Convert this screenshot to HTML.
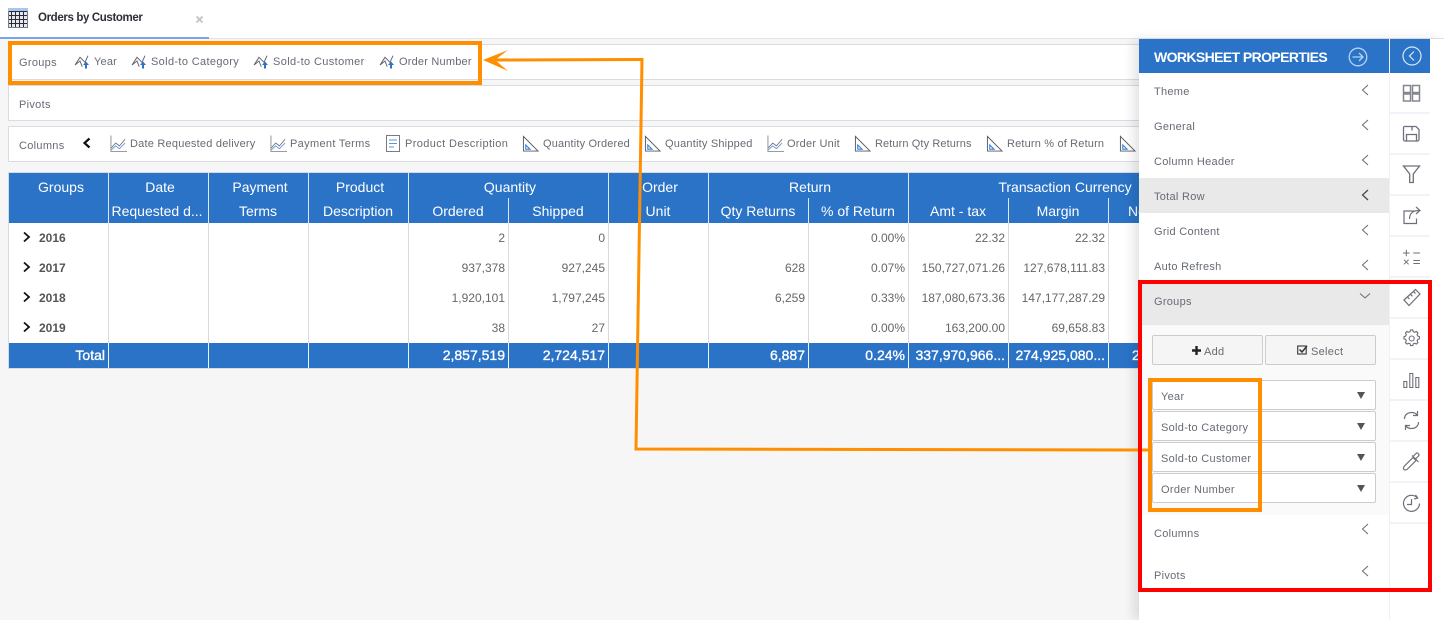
<!DOCTYPE html>
<html><head><meta charset="utf-8"><title>Orders by Customer</title>
<style>
html,body{margin:0;padding:0;width:1444px;height:620px;overflow:hidden;background:#fff}
#page{position:relative;width:1444px;height:620px;overflow:hidden;background:#f6f6f6;font-family:"Liberation Sans",sans-serif}
#page div,#page span.a,#page svg.a{position:absolute}
.t{font-size:11px;color:#666b74;white-space:nowrap;letter-spacing:.3px;line-height:14px}
.bar{left:8px;width:1140px;height:36px;background:#fff;border:1px solid #d8dce3;box-sizing:border-box}
.h{height:24px;line-height:24px;color:#fff;font-size:14px;text-align:center;white-space:nowrap}
.c{width:97px;height:30px;line-height:30px;font-size:12px;color:#666;text-align:right;white-space:nowrap}
.f{width:97px;height:25px;line-height:25px;font-size:14px;color:#fff;text-align:right;white-space:nowrap;-webkit-text-stroke:.35px #fff}
.y{left:39px;height:30px;line-height:30px;font-size:12px;font-weight:bold;color:#555}
.vl{width:1px;background:#d5dae3}
.m{left:1154px;font-size:11px;color:#666b74;white-space:nowrap;letter-spacing:.28px;line-height:14px}
.sep{left:1390px;width:40px;height:2px;background:#f0f3f8}
.fld{left:1152px;width:224px;background:#fff;border:1px solid #ccc;border-radius:2px;box-sizing:border-box}
.tri{left:1357px;width:0;height:0;border-left:4px solid transparent;border-right:4px solid transparent;border-top:7px solid #555}
.btn{top:335px;height:30px;background:#f5f5f5;border:1px solid #ccc;border-radius:2px;box-sizing:border-box}
</style></head>
<body><div id="page">
<svg width="0" height="0" style="position:absolute"><defs>
<symbol id="g" viewBox="0 0 18 16"><path d="M1 11 6 3.300l5 5L14 1.700M1 11l5-4 2.300 5.700" fill="none" stroke="#626773" stroke-width="1"/><path d="M12 14.500V10" fill="none" stroke="#2a73c7" stroke-width="2"/><path d="M9 11 12 7.500 15 11z" fill="#2a73c7"/></symbol>
<symbol id="l" viewBox="0 0 18 18"><path d="M1 0v17h17" fill="none" stroke="#8a8e96" stroke-width="1"/><path d="M1.500 13 6 8l4 3 6-7" fill="none" stroke="#6a6e78" stroke-width=".9"/><path d="M1.500 15 6 11l4 3 6-6" fill="none" stroke="#5b93d8" stroke-width=".9"/></symbol>
<symbol id="r" viewBox="0 0 18 18"><path d="M1.500 1v15.500H17z" fill="none" stroke="#555a64" stroke-width="1"/><path d="M4 10v4.500h4.500z" fill="none" stroke="#3a85dc" stroke-width="1.200"/></symbol>
<symbol id="ch" viewBox="0 0 8 12"><path d="M7 1 1.500 6 7 11" fill="none" stroke="#666b74" stroke-width="1"/></symbol>
</defs></svg>

<!-- tab bar -->
<div style="left:0;top:0;width:1444px;height:38px;background:#fff"></div>
<div style="left:0;top:38px;width:1444px;height:1px;background:#e2e4e8"></div>
<div style="left:0;top:37px;width:209px;height:2px;background:#78a6e6"></div>
<svg class="a" style="left:8px;top:8px" width="20" height="20" viewBox="0 0 20 20"><rect width="20" height="20" fill="#e6e8ee"/><rect width="20" height="3" fill="#a8c6ee"/><path d="M0 3.500h20M0 7.500h20M0 11.500h20M0 15.500h20M3.500 3v17M7.500 3v17M11.500 3v17M15.500 3v17" stroke="#2a2c36" stroke-width="1"/><path d="M.500 3v16.500h19V3" fill="none" stroke="#777b88"/></svg>
<div class="t" style="left:38px;top:11px;font-size:11.500px;font-weight:bold;color:#2c2f36;letter-spacing:-.37px">Orders by Customer</div>
<svg class="a" style="left:196px;top:16px" width="7" height="7"><path d="M.500.500l6 6M6.500.500l-6 6" stroke="#c4c4c4" stroke-width="1.800"/></svg>

<!-- bars -->
<div class="bar" style="top:44px"></div>
<div class="bar" style="top:85px"></div>
<div class="bar" style="top:126px"></div>
<div class="t" style="left:19px;top:56px">Groups</div>
<svg class="a" style="left:74px;top:54px" width="18" height="16"><use href="#g"/></svg><div class="t" style="left:94px;top:55px;letter-spacing:.2px">Year</div>
<svg class="a" style="left:131px;top:54px" width="18" height="16"><use href="#g"/></svg><div class="t" style="left:151px;top:55px;letter-spacing:.35px">Sold-to Category</div>
<svg class="a" style="left:253px;top:54px" width="18" height="16"><use href="#g"/></svg><div class="t" style="left:273px;top:55px;letter-spacing:.38px">Sold-to Customer</div>
<svg class="a" style="left:379px;top:54px" width="18" height="16"><use href="#g"/></svg><div class="t" style="left:399px;top:55px;letter-spacing:.2px">Order Number</div>
<div class="t" style="left:19px;top:98px">Pivots</div>
<div class="t" style="left:19px;top:139px">Columns</div>
<svg class="a" style="left:82px;top:137px" width="9" height="12"><path d="M7.500 1.500 2.500 6l5 4.500" fill="none" stroke="#111" stroke-width="2.200"/></svg>
<svg class="a" style="left:110px;top:135px" width="17" height="18"><use href="#l"/></svg><div class="t" style="left:130px;top:137px;letter-spacing:.22px">Date Requested delivery</div>
<svg class="a" style="left:270px;top:135px" width="17" height="18"><use href="#l"/></svg><div class="t" style="left:290px;top:137px;letter-spacing:.33px">Payment Terms</div>
<svg class="a" style="left:386px;top:135px" width="14" height="18"><rect x=".500" y=".500" width="13" height="16" fill="none" stroke="#777b85"/><path d="M3 5h8M3 8.500h8M3 12h5" stroke="#5b93d8"/></svg><div class="t" style="left:405px;top:137px;letter-spacing:.38px">Product Description</div>
<svg class="a" style="left:522px;top:135px" width="17" height="18"><use href="#r"/></svg><div class="t" style="left:543px;top:137px;letter-spacing:.16px">Quantity Ordered</div>
<svg class="a" style="left:644px;top:135px" width="17" height="18"><use href="#r"/></svg><div class="t" style="left:665px;top:137px;letter-spacing:.2px">Quantity Shipped</div>
<svg class="a" style="left:767px;top:135px" width="17" height="18"><use href="#l"/></svg><div class="t" style="left:787px;top:137px;letter-spacing:.22px">Order Unit</div>
<svg class="a" style="left:854px;top:135px" width="17" height="18"><use href="#r"/></svg><div class="t" style="left:875px;top:137px;letter-spacing:.1px">Return Qty Returns</div>
<svg class="a" style="left:986px;top:135px" width="17" height="18"><use href="#r"/></svg><div class="t" style="left:1007px;top:137px;letter-spacing:.17px">Return % of Return</div>
<svg class="a" style="left:1119px;top:135px" width="17" height="18"><use href="#r"/></svg>

<!-- table -->
<div style="left:8px;top:172px;width:1140px;height:197px;background:#fff;border:1px solid #d5dae3;box-sizing:border-box"></div>
<div style="left:9px;top:173px;width:1139px;height:50px;background:#2a73c7"></div>
<div style="left:9px;top:343px;width:1139px;height:25px;background:#2a73c7"></div>
<div class="vl" style="left:108px;top:173px;height:195px"></div>
<div class="vl" style="left:208px;top:173px;height:195px"></div>
<div class="vl" style="left:308px;top:173px;height:195px"></div>
<div class="vl" style="left:408px;top:173px;height:195px"></div>
<div class="vl" style="left:508px;top:223px;height:145px"></div>
<div class="vl" style="left:608px;top:173px;height:195px"></div>
<div class="vl" style="left:708px;top:173px;height:195px"></div>
<div class="vl" style="left:808px;top:223px;height:145px"></div>
<div class="vl" style="left:908px;top:173px;height:195px"></div>
<div class="vl" style="left:1008px;top:223px;height:145px"></div>
<div class="vl" style="left:1108px;top:223px;height:145px"></div>
<div class="vl" style="left:508px;top:198px;height:25px;background:#dfe8f4"></div>
<div class="vl" style="left:808px;top:198px;height:25px;background:#dfe8f4"></div>
<div class="vl" style="left:1008px;top:198px;height:25px;background:#dfe8f4"></div>
<div class="vl" style="left:1108px;top:198px;height:25px;background:#dfe8f4"></div>
<div class="vl" style="left:108px;top:173px;height:50px;background:#dfe8f4"></div>
<div class="vl" style="left:208px;top:173px;height:50px;background:#dfe8f4"></div>
<div class="vl" style="left:308px;top:173px;height:50px;background:#dfe8f4"></div>
<div class="vl" style="left:408px;top:173px;height:50px;background:#dfe8f4"></div>
<div class="vl" style="left:608px;top:173px;height:50px;background:#dfe8f4"></div>
<div class="vl" style="left:708px;top:173px;height:50px;background:#dfe8f4"></div>
<div class="vl" style="left:908px;top:173px;height:50px;background:#dfe8f4"></div>
<div class="vl" style="left:108px;top:343px;height:25px;background:#eef3fa"></div>
<div class="vl" style="left:208px;top:343px;height:25px;background:#eef3fa"></div>
<div class="vl" style="left:308px;top:343px;height:25px;background:#eef3fa"></div>
<div class="vl" style="left:408px;top:343px;height:25px;background:#eef3fa"></div>
<div class="vl" style="left:508px;top:343px;height:25px;background:#eef3fa"></div>
<div class="vl" style="left:608px;top:343px;height:25px;background:#eef3fa"></div>
<div class="vl" style="left:708px;top:343px;height:25px;background:#eef3fa"></div>
<div class="vl" style="left:808px;top:343px;height:25px;background:#eef3fa"></div>
<div class="vl" style="left:908px;top:343px;height:25px;background:#eef3fa"></div>
<div class="vl" style="left:1008px;top:343px;height:25px;background:#eef3fa"></div>
<div class="vl" style="left:1108px;top:343px;height:25px;background:#eef3fa"></div>

<div class="h" style="left:11px;top:175px;width:100px">Groups</div>
<div class="h" style="left:110px;top:175px;width:100px">Date</div>
<div class="h" style="left:210px;top:175px;width:100px">Payment</div>
<div class="h" style="left:310px;top:175px;width:100px">Product</div>
<div class="h" style="left:410px;top:175px;width:200px">Quantity</div>
<div class="h" style="left:610px;top:175px;width:100px">Order</div>
<div class="h" style="left:710px;top:175px;width:200px">Return</div>
<div class="h" style="left:915px;top:175px;width:300px">Transaction Currency</div>
<div class="h" style="left:107px;top:199px;width:100px">Requested d...</div>
<div class="h" style="left:208px;top:199px;width:100px">Terms</div>
<div class="h" style="left:308px;top:199px;width:100px">Description</div>
<div class="h" style="left:408px;top:199px;width:100px">Ordered</div>
<div class="h" style="left:508px;top:199px;width:100px">Shipped</div>
<div class="h" style="left:608px;top:199px;width:100px">Unit</div>
<div class="h" style="left:708px;top:199px;width:100px">Qty Returns</div>
<div class="h" style="left:808px;top:199px;width:100px">% of Return</div>
<div class="h" style="left:908px;top:199px;width:100px">Amt - tax</div>
<div class="h" style="left:1008px;top:199px;width:100px">Margin</div>
<div class="h" style="left:1128px;top:199px;width:40px;text-align:left">Net</div>

<svg class="a" style="left:22px;top:231px" width="9" height="12"><path d="M2 1.500 7 6l-5 4.500" fill="none" stroke="#111" stroke-width="1.800"/></svg>
<svg class="a" style="left:22px;top:261px" width="9" height="12"><path d="M2 1.500 7 6l-5 4.500" fill="none" stroke="#111" stroke-width="1.800"/></svg>
<svg class="a" style="left:22px;top:291px" width="9" height="12"><path d="M2 1.500 7 6l-5 4.500" fill="none" stroke="#111" stroke-width="1.800"/></svg>
<svg class="a" style="left:22px;top:321px" width="9" height="12"><path d="M2 1.500 7 6l-5 4.500" fill="none" stroke="#111" stroke-width="1.800"/></svg>
<div class="y" style="top:223px">2016</div>
<div class="y" style="top:253px">2017</div>
<div class="y" style="top:283px">2018</div>
<div class="y" style="top:313px">2019</div>

<div class="c" style="left:408px;top:223px">2</div><div class="c" style="left:508px;top:223px">0</div><div class="c" style="left:808px;top:223px">0.00%</div><div class="c" style="left:908px;top:223px">22.32</div><div class="c" style="left:1008px;top:223px">22.32</div>
<div class="c" style="left:408px;top:253px">937,378</div><div class="c" style="left:508px;top:253px">927,245</div><div class="c" style="left:708px;top:253px">628</div><div class="c" style="left:808px;top:253px">0.07%</div><div class="c" style="left:908px;top:253px">150,727,071.26</div><div class="c" style="left:1008px;top:253px">127,678,111.83</div>
<div class="c" style="left:408px;top:283px">1,920,101</div><div class="c" style="left:508px;top:283px">1,797,245</div><div class="c" style="left:708px;top:283px">6,259</div><div class="c" style="left:808px;top:283px">0.33%</div><div class="c" style="left:908px;top:283px">187,080,673.36</div><div class="c" style="left:1008px;top:283px">147,177,287.29</div>
<div class="c" style="left:408px;top:313px">38</div><div class="c" style="left:508px;top:313px">27</div><div class="c" style="left:808px;top:313px">0.00%</div><div class="c" style="left:908px;top:313px">163,200.00</div><div class="c" style="left:1008px;top:313px">69,658.83</div>

<div class="f" style="left:8px;top:343px">Total</div>
<div class="f" style="left:408px;top:343px">2,857,519</div><div class="f" style="left:508px;top:343px">2,724,517</div><div class="f" style="left:708px;top:343px">6,887</div><div class="f" style="left:808px;top:343px">0.24%</div><div class="f" style="left:908px;top:343px">337,970,966...</div><div class="f" style="left:1008px;top:343px">274,925,080...</div>
<div class="f" style="left:1132px;top:343px;width:30px;text-align:left">2</div>

<!-- right panel -->
<div style="left:1139px;top:39px;width:305px;height:581px;background:#fff;box-shadow:-6px 0 10px rgba(0,0,0,.10)"></div>
<div style="left:1389px;top:39px;width:1px;height:581px;background:#eef1f6"></div>
<div style="left:1430px;top:39px;width:14px;height:581px;background:#fff"></div>
<div style="left:1139px;top:39px;width:250px;height:34px;background:#2a73c7"></div>
<div style="left:1390px;top:39px;width:40px;height:34px;background:#2a73c7"></div>
<div class="t" style="left:1154px;top:50px;font-size:14px;font-weight:bold;color:#fff;letter-spacing:-.6px">WORKSHEET PROPERTIES</div>
<svg class="a" style="left:1348px;top:47px" width="20" height="20" fill="none" stroke="#b7d2f0" stroke-width="1.300"><circle cx="10" cy="10" r="8.800"/><path d="M4.500 10h10.500M11 6l4 4-4 4"/></svg>
<svg class="a" style="left:1402px;top:46px" width="20" height="20" fill="none" stroke="#dbe8f7" stroke-width="1.200"><circle cx="10" cy="10" r="9"/><path d="M12 5.500 7.500 10l4.500 4.500"/></svg>

<div style="left:1139px;top:178px;width:250px;height:35px;background:#e9e9e9"></div>
<div style="left:1139px;top:283px;width:250px;height:42px;background:#e9e9e9"></div>
<div style="left:1139px;top:325px;width:250px;height:190px;background:#fafafa"></div>

<div class="m" style="top:85px">Theme</div><svg class="a" style="left:1361px;top:84px" width="8" height="12"><use href="#ch"/></svg>
<div class="m" style="top:120px">General</div><svg class="a" style="left:1361px;top:119px" width="8" height="12"><use href="#ch"/></svg>
<div class="m" style="top:155px">Column Header</div><svg class="a" style="left:1361px;top:154px" width="8" height="12"><use href="#ch"/></svg>
<div class="m" style="top:190px">Total Row</div><svg class="a" style="left:1361px;top:189px" width="8" height="12"><path d="M7 1 1.500 6 7 11" fill="none" stroke="#444" stroke-width="1.200"/></svg>
<div class="m" style="top:225px">Grid Content</div><svg class="a" style="left:1361px;top:224px" width="8" height="12"><use href="#ch"/></svg>
<div class="m" style="top:260px">Auto Refresh</div><svg class="a" style="left:1361px;top:259px" width="8" height="12"><use href="#ch"/></svg>
<div class="m" style="top:295px">Groups</div><svg class="a" style="left:1359px;top:292px" width="12" height="8"><path d="M1 1.500 6 6l5-4.500" fill="none" stroke="#666b74" stroke-width="1"/></svg>
<div class="m" style="top:527px">Columns</div><svg class="a" style="left:1361px;top:523px" width="8" height="12"><use href="#ch"/></svg>
<div class="m" style="top:569px">Pivots</div><svg class="a" style="left:1361px;top:565px" width="8" height="12"><use href="#ch"/></svg>

<div class="btn" style="left:1152px;width:111px"></div>
<div class="btn" style="left:1265px;width:111px"></div>
<svg class="a" style="left:1192px;top:346px" width="9" height="9"><path d="M4.500 0v9M0 4.500h9" stroke="#222" stroke-width="2.400"/></svg>
<div class="t" style="left:1204px;top:345px">Add</div>
<svg class="a" style="left:1297px;top:345px" width="11" height="10" fill="none"><rect x=".700" y="1" width="8.500" height="8" stroke="#444" stroke-width="1.200"/><path d="M2.500 4.500 5 7l5-6" stroke="#333" stroke-width="1.500"/></svg>
<div class="t" style="left:1311px;top:345px">Select</div>

<div class="fld" style="top:380px;height:30px"></div>
<div class="fld" style="top:411px;height:30px"></div>
<div class="fld" style="top:442px;height:30px"></div>
<div class="fld" style="top:473px;height:30px"></div>
<div class="t" style="left:1161px;top:390px">Year</div>
<div class="t" style="left:1161px;top:421px">Sold-to Category</div>
<div class="t" style="left:1161px;top:452px">Sold-to Customer</div>
<div class="t" style="left:1161px;top:483px">Order Number</div>
<div class="tri" style="top:392px"></div>
<div class="tri" style="top:423px"></div>
<div class="tri" style="top:454px"></div>
<div class="tri" style="top:485px"></div>

<!-- toolbar -->
<div class="sep" style="top:112px"></div><div class="sep" style="top:153px"></div><div class="sep" style="top:194px"></div><div class="sep" style="top:235px"></div><div class="sep" style="top:276px"></div><div class="sep" style="top:317px"></div><div class="sep" style="top:358px"></div><div class="sep" style="top:399px"></div><div class="sep" style="top:440px"></div><div class="sep" style="top:481px"></div><div class="sep" style="top:522px"></div>

<svg class="a" style="left:1400px;top:82px" width="24" height="440" fill="none" stroke="#6d707a" stroke-width="1.100">
<path d="M3.500 3.500h7v7h-7zM12.500 3.500h7v7h-7zM3.500 12h7v7h-7zM12.500 12h7v7h-7z" stroke-width="1.500" stroke="#85878f"/>
<path d="M5.500 44.500h10.500l3 3v10a1.500 1.500 0 0 1-1.500 1.500h-12.500a1.500 1.500 0 0 1-1.500-1.500v-12a1.500 1.500 0 0 1 2-1zM6.500 59v-6.500h10v6.500M12 44.500v4" stroke-width="1.300"/>
<path d="M3.500 84h16l-6.200 8v8.500h-3.600v-8.500z" stroke-width="1.300"/>
<path d="M14 129h-10v12.500h12.500v-5M9.500 137c0-5 3-8.500 9.500-8.500M16 125l4 3.500-4 3.500" stroke-width="1.200"/>
<path d="M3 171h6.600M6.300 167.700v6.600M13.300 171h6.600M4 177.700l4.600 4.600M8.600 177.700l-4.600 4.600M13.300 178.500h6.600M13.300 181.500h6.600" stroke-width="1"/>
<path d="M4 218 15.500 207.500 20 212 9 223.500zM7.500 215l2 2M10.500 212.300l2 2M13.500 209.600l2 2" stroke-width="1.200"/>
<circle cx="11.700" cy="256.500" r="2.500"/><path d="M10 248.500h3l.6 2.300 2 .9 2.200-1.100 2 2-1.100 2.200.8 2 2.300.7v3l-2.300.7-.8 2 1.100 2.100-2 2.100-2.200-1.100-2 .8-.6 2.300h-3l-.6-2.300-2-.8-2.200 1.100-2-2.100 1.100-2.100-.8-2-2.300-.7v-3l2.300-.7.8-2-1.100-2.200 2-2 2.200 1.100 2-.9z" transform="translate(11.700 256.500) scale(.75) translate(-11.500 -260)" stroke-width="1.500"/>
<path d="M3.800 299.500h3v6h-3zM9.800 291.500h3v14h-3zM15.800 295.500h3v10h-3z" stroke-width="1.100"/>
<path d="M4.500 337c0-4 3-6.500 7-6.500 2.500 0 4.500 1 5.500 2.500M17.500 329v4.500H13M18.500 340c0 4-3 6.500-7 6.500-2.500 0-4.500-1-5.500-2.500M5.500 348v-4.500H10" stroke-width="1.200"/>
<path d="M4 387.500c-1-1-.5-2 0-3l9-9 3 3-9 9c-1 .5-2 1-3 0zM12 373.500l6.500 6.500M15.500 377l3-3c1.500-1.500-1-4-2.500-2.500l-3 3" stroke-width="1.200"/>
<path d="M17 415.500a8 8 0 1 0 2.500 6M11.500 417v5.500H7M15.500 413l2.200 3-3.500 1" stroke-width="1.200"/>
</svg>

<!-- annotations -->
<svg class="a" style="left:0;top:0;pointer-events:none" width="1444" height="620" fill="none">
<polyline points="490,60 642,59.500 636,449 1150,450" stroke="#ff8f00" stroke-width="3"/>
<path d="M483 60 508 50 495 60 508 71z" fill="#ff8f00"/>
<rect x="10" y="43" width="470" height="40" stroke="#ff8f00" stroke-width="4"/>
<rect x="1150" y="380" width="110" height="130" stroke="#ff8f00" stroke-width="4"/>
<rect x="1140" y="282" width="290" height="308" stroke="#ff0000" stroke-width="4"/>
</svg>
</div></body></html>
